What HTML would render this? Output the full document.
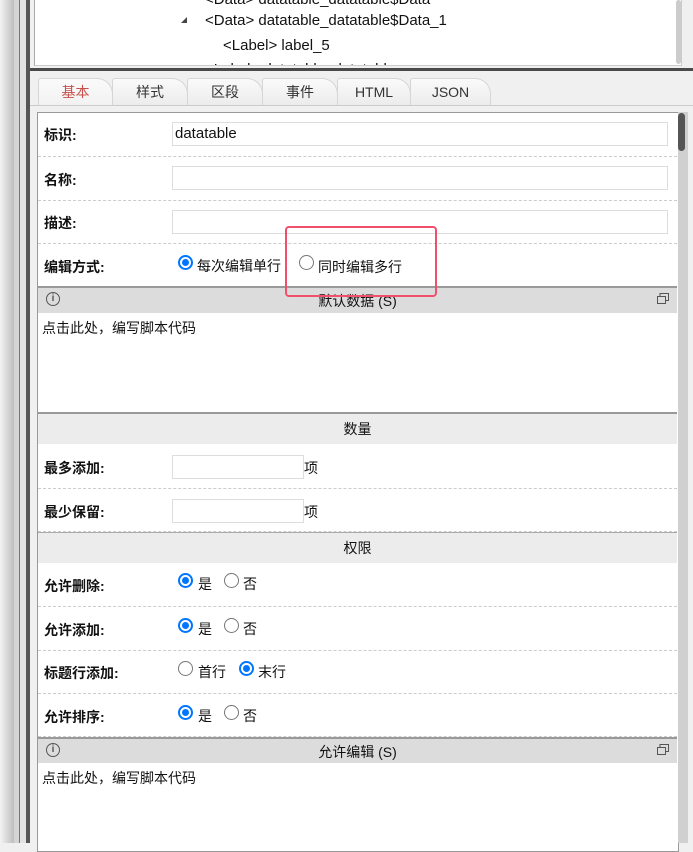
<!DOCTYPE html>
<html><head><meta charset="utf-8"><style>
*{box-sizing:border-box;margin:0;padding:0}
body{width:693px;height:843px;overflow:hidden;position:relative;background:#f0f0f0;font-family:"Liberation Sans","Noto Sans CJK SC",sans-serif;font-size:14px;color:#111}
.a{position:absolute}
.lbl{position:absolute;left:44px;font-weight:bold;font-size:14px}
.inp{position:absolute;left:172px;height:24px;border:1px solid #ddd;background:#fff;font-size:15px;padding-left:2px;line-height:22px}
.dash{position:absolute;left:38px;width:639px;border-top:1px dashed #ccc;height:0}
.hdr{position:absolute;left:38px;width:639px;background:#ececec;text-align:center;line-height:30px;font-size:14px}
.sh{position:absolute;left:38px;width:639px;height:26px;background:#dcdcdc;text-align:center;line-height:26px;font-size:14px;border-top:2px solid #999}
.r{position:absolute;width:15px;height:15px;border-radius:50%;border:1px solid #767676;background:#fff}
.r.on{border:2px solid #0075ff}
.r.on::after{content:"";position:absolute;left:2px;top:2px;width:7px;height:7px;border-radius:50%;background:#0075ff}
.t{position:absolute;font-size:14px}
.tab{position:absolute;top:78px;height:27px;border:1px solid #d6d6d6;border-bottom:none;border-radius:3px 16px 0 0;background:linear-gradient(#fafafa,#ececec);text-align:center;line-height:27px;font-size:14px;color:#333}
.info{position:absolute;left:46px;width:14px;height:14px;border:1.5px solid #555;border-radius:50%;font-size:10px;line-height:11px;text-align:center;font-weight:bold;color:#555}
.win{position:absolute;left:657px;width:12px;height:11px}
</style></head><body>
<div class="a" style="left:0;top:0;width:14px;height:843px;background:linear-gradient(90deg,#f4f4f4,#bdbdbd)"></div>
<div class="a" style="left:14px;top:0;width:5px;height:843px;background:#d4d4d4"></div>
<div class="a" style="left:19px;top:0;width:1px;height:843px;background:#777"></div>
<div class="a" style="left:20px;top:0;width:6px;height:843px;background:#e2e2e2"></div>
<div class="a" style="left:26px;top:0;width:4px;height:843px;background:#555"></div>
<!-- tree -->
<div class="a" style="left:34px;top:0;width:648px;height:66px;background:#fff;border-left:1px solid #aaa;border-right:1px solid #ccc;border-bottom:1px solid #ccc"></div>
<div class="a" style="left:676px;top:0;width:5px;height:64px;background:#ccc;border-radius:3px"></div>
<div class="t" style="left:205px;top:-9px;font-size:15px">&lt;Data&gt; datatable_datatable$Data</div>
<div class="a" style="left:181px;top:17px;width:0;height:0;border-left:6px solid transparent;border-bottom:6px solid #444"></div>
<div class="t" style="left:205px;top:12px;font-size:15px">&lt;Label&gt;</div>
<div class="t" style="left:205px;top:12px;font-size:15px;background:#fff">&lt;Data&gt; datatable_datatable$Data_1</div>
<div class="t" style="left:223px;top:37px;font-size:15px">&lt;Label&gt; label_5</div>
<div class="t" style="left:205px;top:61px;font-size:15px;height:4px;overflow:hidden">&lt;Label&gt; datatable_datatable</div>
<div class="a" style="left:30px;top:68px;width:663px;height:3px;background:#4a4a4a"></div>
<!-- tabs -->
<div class="tab" style="left:38px;width:75px;color:#c8504a;background:linear-gradient(#fafafa,#f2f2f2)">基本</div>
<div class="tab" style="left:112px;width:76px">样式</div>
<div class="tab" style="left:187px;width:76px">区段</div>
<div class="tab" style="left:262px;width:76px">事件</div>
<div class="tab" style="left:337px;width:74px">HTML</div>
<div class="tab" style="left:410px;width:81px">JSON</div>
<div class="a" style="left:30px;top:105px;width:663px;height:1px;background:#ccc"></div>
<!-- content -->
<div class="a" style="left:37px;top:112px;width:642px;height:740px;background:#fff;border:1px solid #999"></div>
<div class="a" style="left:678px;top:112px;width:10px;height:731px;background:#d0d0d0"></div>
<div class="a" style="left:678px;top:113px;width:7px;height:38px;background:#555;border-radius:4px"></div>

<div class="lbl" style="top:125px">标识:</div>
<div class="inp" style="top:122px;width:496px">datatable</div>
<div class="dash" style="top:156px"></div>
<div class="lbl" style="top:170px">名称:</div>
<div class="inp" style="top:166px;width:496px"></div>
<div class="dash" style="top:200px"></div>
<div class="lbl" style="top:213px">描述:</div>
<div class="inp" style="top:210px;width:496px"></div>
<div class="dash" style="top:243px"></div>
<div class="lbl" style="top:257px">编辑方式:</div>
<div class="r on" style="left:178px;top:255px"></div>
<div class="t" style="left:197px;top:256px">每次编辑单行</div>
<div class="r" style="left:299px;top:255px"></div>
<div class="t" style="left:318px;top:257px">同时编辑多行</div>
<div class="dash" style="top:286px"></div>

<div class="sh" style="top:286px;height:27px">默认数据 (S)</div>
<div class="info" style="top:292px">i</div>
<svg class="win" style="top:293px" viewBox="0 0 12 11"><rect x="0.5" y="3.5" width="8" height="7" fill="none" stroke="#555"/><path d="M3 3.5V0.5h8.5v7H8.5" fill="none" stroke="#555"/></svg>
<div class="t" style="left:42px;top:318px">点击此处，编写脚本代码</div>
<div class="a" style="left:38px;top:412px;width:639px;height:2px;background:#999"></div>

<div class="hdr" style="top:414px">数量</div>
<div class="lbl" style="top:458px">最多添加:</div>
<div class="inp" style="top:455px;width:132px"></div>
<div class="t" style="left:304px;top:458px">项</div>
<div class="dash" style="top:488px"></div>
<div class="lbl" style="top:502px">最少保留:</div>
<div class="inp" style="top:499px;width:132px"></div>
<div class="t" style="left:304px;top:502px">项</div>
<div class="dash" style="top:531px"></div>
<div class="a" style="left:38px;top:532px;width:639px;height:1px;background:#aaa"></div>

<div class="hdr" style="top:533px">权限</div>
<div class="lbl" style="top:576px">允许删除:</div>
<div class="r on" style="left:178px;top:573px"></div><div class="t" style="left:198px;top:574px">是</div>
<div class="r" style="left:224px;top:573px"></div><div class="t" style="left:243px;top:574px">否</div>
<div class="dash" style="top:606px"></div>
<div class="lbl" style="top:620px">允许添加:</div>
<div class="r on" style="left:178px;top:618px"></div><div class="t" style="left:198px;top:619px">是</div>
<div class="r" style="left:224px;top:618px"></div><div class="t" style="left:243px;top:619px">否</div>
<div class="dash" style="top:650px"></div>
<div class="lbl" style="top:663px">标题行添加:</div>
<div class="r" style="left:178px;top:661px"></div><div class="t" style="left:198px;top:662px">首行</div>
<div class="r on" style="left:239px;top:661px"></div><div class="t" style="left:258px;top:662px">末行</div>
<div class="dash" style="top:693px"></div>
<div class="lbl" style="top:707px">允许排序:</div>
<div class="r on" style="left:178px;top:705px"></div><div class="t" style="left:198px;top:706px">是</div>
<div class="r" style="left:224px;top:705px"></div><div class="t" style="left:243px;top:706px">否</div>
<div class="dash" style="top:736px"></div>

<div class="sh" style="top:737px">允许编辑 (S)</div>
<div class="info" style="top:743px">i</div>
<svg class="win" style="top:744px" viewBox="0 0 12 11"><rect x="0.5" y="3.5" width="8" height="7" fill="none" stroke="#555"/><path d="M3 3.5V0.5h8.5v7H8.5" fill="none" stroke="#555"/></svg>
<div class="t" style="left:42px;top:768px">点击此处，编写脚本代码</div>

<div class="a" style="left:285px;top:226px;width:152px;height:71px;border:2px solid #f0506e;border-radius:4px"></div>
</body></html>
